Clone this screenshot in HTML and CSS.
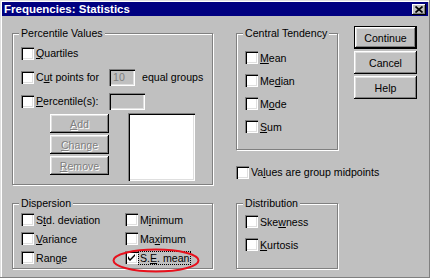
FILE: index.html
```html
<!DOCTYPE html>
<html lang="en">
<head>
  <meta charset="UTF-8" />
  <title>Frequencies: Statistics</title>
  <link rel="stylesheet" href="styles.css">
</head>
<body>
  <div class="window">
    <div class="titlebar">
      <span class="title">Frequencies: Statistics</span>
      <span class="close">
        <svg width="8" height="7" viewBox="0 0 8 7"><path d="M0.5 0.5 L7.5 6.5 M7.5 0.5 L0.5 6.5" stroke="#000" stroke-width="1.7" fill="none"/></svg>
      </span>
    </div>

    <div class="content">
      <!-- left column -->
      <div class="col-left">
        <div class="group percentile">
          <span class="caption">Percentile Values</span>
          <div class="row">
            <label class="cb"><span class="box"></span><span class="txt"><u>Q</u>uartiles</span></label>
          </div>
          <div class="row">
            <label class="cb wide"><span class="box"></span><span class="txt">C<u>u</u>t points for</span></label>
            <span class="field small">10</span>
            <span class="after">equal groups</span>
          </div>
          <div class="row">
            <label class="cb wide"><span class="box"></span><span class="txt"><u>P</u>ercentile(s):</span></label>
            <span class="field medium"></span>
          </div>
          <div class="list-area">
            <div class="list-buttons">
              <span class="btn small-btn disabled"><u>A</u>dd</span>
              <span class="btn small-btn disabled"><u>C</u>hange</span>
              <span class="btn small-btn disabled"><u>R</u>emove</span>
            </div>
            <div class="listbox"></div>
          </div>
        </div>

        <div class="group dispersion">
          <span class="caption">Dispersion</span>
          <div class="grid">
            <label class="cb"><span class="box"></span><span class="txt">S<u>t</u>d. deviation</span></label>
            <label class="cb"><span class="box"></span><span class="txt">M<u>i</u>nimum</span></label>
            <label class="cb"><span class="box"></span><span class="txt"><u>V</u>ariance</span></label>
            <label class="cb"><span class="box"></span><span class="txt">Ma<u>x</u>imum</span></label>
            <label class="cb"><span class="box"></span><span class="txt">Ran<u>g</u>e</span></label>
            <label class="cb marked">
              <span class="box">
                <svg width="7" height="7" viewBox="0 0 7 7"><path d="M0 2v3l2 2l5-5V0L2 5z" fill="#000"/></svg>
              </span>
              <span class="txt focus">S.<u>E</u>. mean</span>
              <svg class="ring" width="88" height="25" viewBox="0 0 88 25"><ellipse cx="44" cy="12.5" rx="42.5" ry="11" fill="none" stroke="#e8101c" stroke-width="2"/></svg>
            </label>
          </div>
        </div>
      </div>

      <!-- middle column -->
      <div class="col-mid">
        <div class="group central">
          <span class="caption">Central Tendency</span>
          <div class="row r23"><label class="cb"><span class="box"></span><span class="txt"><u>M</u>ean</span></label></div>
          <div class="row r23"><label class="cb"><span class="box"></span><span class="txt">Me<u>d</u>ian</span></label></div>
          <div class="row r23"><label class="cb"><span class="box"></span><span class="txt">M<u>o</u>de</span></label></div>
          <div class="row r23"><label class="cb"><span class="box"></span><span class="txt"><u>S</u>um</span></label></div>
        </div>

        <div class="row values">
          <label class="cb"><span class="box"></span><span class="txt">Va<u>l</u>ues are group midpoints</span></label>
        </div>

        <div class="group distribution">
          <span class="caption">Distribution</span>
          <div class="row r23"><label class="cb"><span class="box"></span><span class="txt">Ske<u>w</u>ness</span></label></div>
          <div class="row r23"><label class="cb"><span class="box"></span><span class="txt"><u>K</u>urtosis</span></label></div>
        </div>
      </div>

      <!-- buttons -->
      <div class="col-buttons">
        <span class="btn default">Continue</span>
        <span class="btn">Cancel</span>
        <span class="btn">Help</span>
      </div>
    </div>
  </div>
</body>
</html>
```

FILE: styles.css
```css
body {
  margin: 0;
  font-family: "Liberation Sans", Arial, sans-serif;
  font-size: 10.6px;
  color: #000;
  background: #c0c0c0;
}
u {
  text-decoration-thickness: 1px;
  text-underline-offset: 1px;
}
.window {
  width: 430px;
  height: 278px;
  box-sizing: border-box;
  padding: 2px;
  background: #c0c0c0;
  box-shadow: inset -1px -1px #808080, inset 1px 1px #dfdfdf, inset 2px 2px #fff;
}
.titlebar {
  height: 14px;
  background: #000080;
  display: flex;
  align-items: center;
  justify-content: space-between;
}
.title {
  color: #fff;
  font-weight: bold;
  font-size: 11.5px;
  padding-left: 2px;
}
.close {
  width: 14px;
  height: 11px;
  margin-right: 2px;
  background: #c0c0c0;
  display: flex;
  align-items: center;
  justify-content: center;
  box-shadow: inset -1px -1px #000, inset 1px 1px #fff, inset -2px -2px #808080;
}
.content {
  display: flex;
  align-items: flex-start;
  padding: 10px 0 0 10px;
}
.col-left {
  width: 201px;
  margin-top: 7px;
  display: flex;
  flex-direction: column;
  gap: 18px;
}
.col-mid {
  width: 102px;
  margin-left: 23px;
  margin-top: 7px;
  display: flex;
  flex-direction: column;
}
.col-buttons {
  width: 63px;
  margin-left: 16px;
  display: flex;
  flex-direction: column;
  gap: 2px;
}

/* group boxes */
.group {
  position: relative;
  box-sizing: border-box;
  border: 1px solid #808080;
  box-shadow: inset 1px 1px #fff, 1px 1px #fff;
  padding-left: 8px;
}
.caption {
  position: absolute;
  top: -7px;
  left: 6px;
  padding: 0 2px;
  line-height: 13px;
  background: #c0c0c0;
}
.percentile {
  height: 152px;
  padding-top: 7px;
}
.dispersion {
  height: 66px;
  padding-top: 6px;
}
.central {
  height: 117px;
  padding-top: 12px;
}
.distribution {
  height: 66px;
  margin-top: 19px;
  padding-top: 6px;
}

.row {
  display: flex;
  align-items: center;
  height: 24px;
}
.row.r23 {
  height: 23px;
}
.row.values {
  margin-top: 10px;
}

/* check boxes */
.cb {
  display: flex;
  align-items: center;
  position: relative;
}
.cb.wide {
  width: 88px;
}
.box {
  width: 13px;
  height: 13px;
  flex: none;
  background: #fff;
  display: flex;
  align-items: center;
  justify-content: center;
  box-shadow: inset 1px 1px #808080, inset 2px 2px #000, inset -1px -1px #fff, inset -2px -2px #dfdfdf;
}
.txt {
  border: 1px solid transparent;
  padding: 0 1px;
  line-height: 12px;
  white-space: nowrap;
}
.txt.focus {
  border: 1px dotted #000;
}
.ring {
  position: absolute;
  left: -13px;
  top: -3px;
}

/* text fields */
.field {
  box-sizing: border-box;
  height: 17px;
  padding-left: 4px;
  line-height: 17px;
  color: #808080;
  box-shadow: inset 1px 1px #808080, inset 2px 2px #000, inset -1px -1px #fff, inset -2px -2px #dfdfdf;
}
.field.small {
  width: 26px;
}
.field.medium {
  width: 36px;
}
.after {
  margin-left: 7px;
}

.list-area {
  display: flex;
  align-items: flex-start;
}
.list-buttons {
  margin: 1px 0 0 29px;
  display: flex;
  flex-direction: column;
  gap: 2px;
}
.listbox {
  width: 67px;
  height: 68px;
  margin-left: 19px;
  background: #fff;
  box-shadow: inset 1px 1px #808080, inset 2px 2px #000, inset -1px -1px #fff, inset -2px -2px #dfdfdf;
}

.grid {
  display: grid;
  grid-template-columns: 104px auto;
  grid-auto-rows: 19px;
  align-items: center;
}

/* push buttons */
.btn {
  box-sizing: border-box;
  height: 23px;
  display: flex;
  align-items: center;
  justify-content: center;
  background: #c0c0c0;
  box-shadow: inset -1px -1px #000, inset 1px 1px #fff, inset -2px -2px #808080, inset 2px 2px #dfdfdf;
}
.btn.default {
  border: 1px solid #000;
}
.small-btn {
  width: 59px;
  height: 19px;
}
.disabled {
  color: #808080;
  text-shadow: 1px 1px 0 #fff;
}
```
